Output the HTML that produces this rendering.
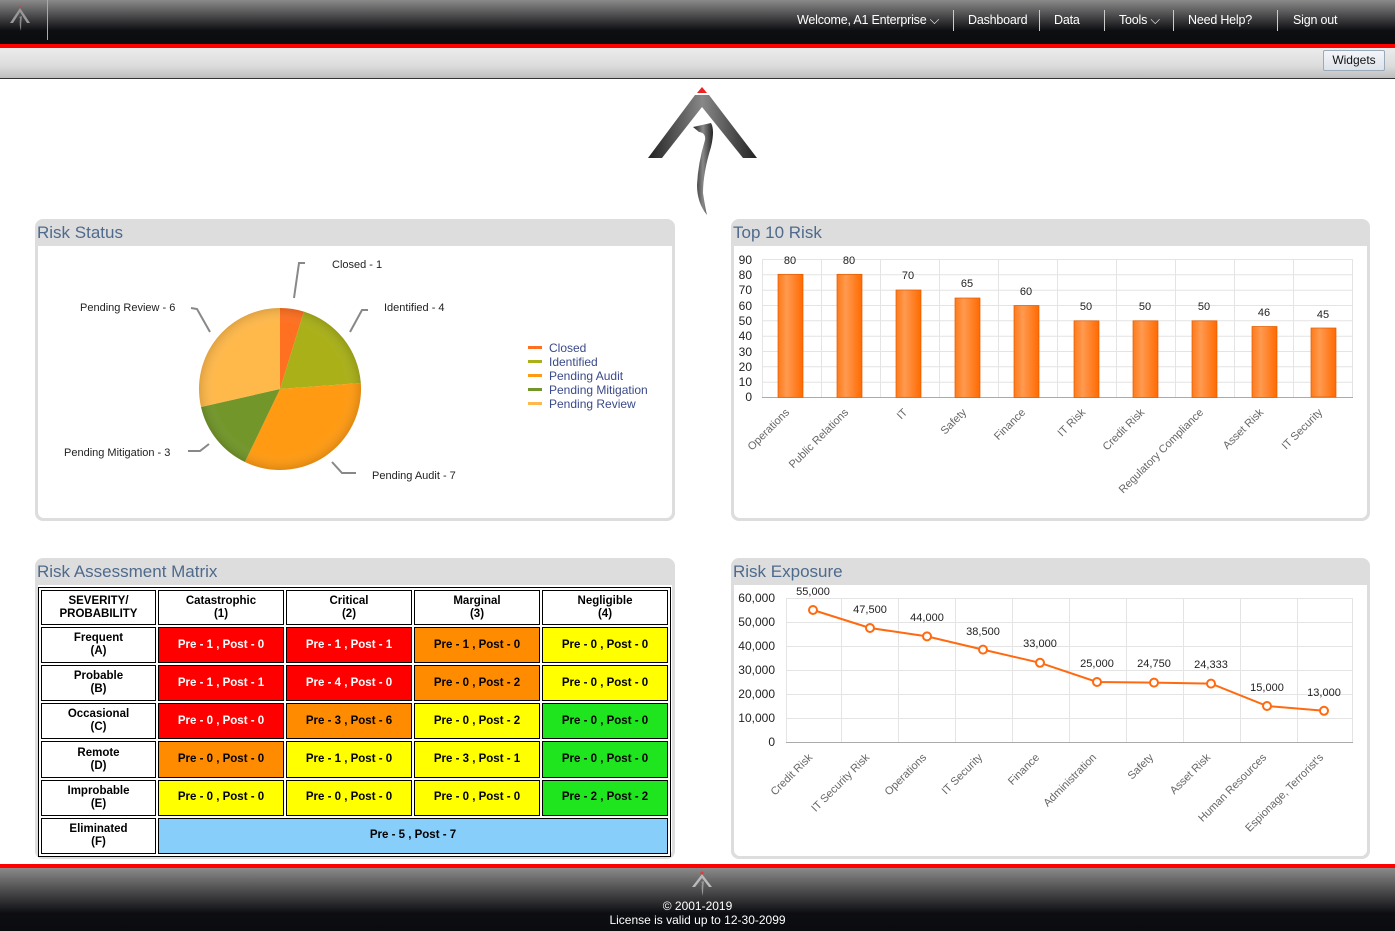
<!DOCTYPE html>
<html><head><meta charset="utf-8">
<style>
*{margin:0;padding:0;box-sizing:border-box}
body{width:1395px;height:931px;position:relative;overflow:hidden;background:#fff;font-family:"Liberation Sans",Arial,sans-serif;}
.top{position:absolute;left:0;top:0;width:1395px;height:44px;background:linear-gradient(#8a8a8a 0%,#3a3a3c 45%,#0d0e12 70%,#0b0c10 100%)}
.red{position:absolute;left:0;width:1395px;height:4px;background:#f00}
.sub{position:absolute;left:0;top:48px;width:1395px;height:31px;background:linear-gradient(#ececec,#dcdcdc 60%,#bdbdbd);border-bottom:1px solid #333}
.nav{position:absolute;top:13px;color:#fff;font-size:12.5px;letter-spacing:-0.2px}
.sep{position:absolute;top:10px;width:1px;height:21px;background:#ccc}
.btn{position:absolute;left:1323px;top:50px;width:62px;height:21px;border:1px solid #9ab;background:linear-gradient(#f4f6fa,#dde3ea);font-size:12px;text-align:center;line-height:19px;color:#111;border-radius:2px}
.panel{position:absolute;background:#ddd;border-radius:8px;}
.panel .ttl{position:absolute;left:2px;top:4px;font-size:17px;color:#4e6a8c}
.panel .in{position:absolute;left:3px;top:27px;right:3px;bottom:3px;background:#fff;border-radius:0 0 6px 6px}
.foot{position:absolute;left:0;top:868px;width:1395px;height:63px;background:linear-gradient(#8a8a8a 0%,#3c3c3e 45%,#0d0e12 72%,#0b0c10);color:#fff;text-align:center;font-size:12px}
table{position:absolute;left:38px;top:587px;border:1px solid #000;border-collapse:separate;border-spacing:2px;background:#fff;width:633px;height:270px}
td{border:1px solid #000;text-align:center;font-size:11.5px;font-weight:bold;line-height:13px;padding:0}
.r{background:#f00;color:#fff}.o{background:#ff8c00}.y{background:#ff0}.g{background:#1fe51f}.b{background:#87cefa}
svg text{font-family:"Liberation Sans",Arial,sans-serif}
</style></head><body>
<div class="top"></div>
<svg style="position:absolute;left:8px;top:5px" width="24" height="28" viewBox="0 0 24 28"><path d="M12 3 L22 18 L19 18 L12 7 L5 18 L2 18Z" fill="#999"/><path d="M10 3 L14 3 L12 1Z" fill="#e33"/><path d="M11 12 L14 11 Q13 18 13 26 Q11 20 12 13Z" fill="#888"/></svg>
<div style="position:absolute;left:47px;top:0;width:1px;height:40px;background:#aaa"></div>
<div class="nav" style="left:797px">Welcome, A1 Enterprise ⌵</div>
<div class="sep" style="left:953px"></div>
<div class="nav" style="left:968px">Dashboard</div>
<div class="sep" style="left:1039px"></div>
<div class="nav" style="left:1054px">Data</div>
<div class="sep" style="left:1104px"></div>
<div class="nav" style="left:1119px">Tools ⌵</div>
<div class="sep" style="left:1173px"></div>
<div class="nav" style="left:1188px">Need Help?</div>
<div class="sep" style="left:1277px"></div>
<div class="nav" style="left:1293px">Sign out</div>
<div class="red" style="top:44px"></div>
<div class="sub"></div>
<div class="btn">Widgets</div>

<svg style="position:absolute;left:645px;top:85px" width="115" height="132" viewBox="0 0 115 132">
<defs><linearGradient id="m" x1="0" x2="1"><stop offset="0" stop-color="#222"/><stop offset=".5" stop-color="#888"/><stop offset="1" stop-color="#222"/></linearGradient></defs>
<path d="M52 3 L62 3 L57 -3Z" fill="#e22" transform="translate(0,5)"/>
<path d="M50 10 L64 10 L112 73 L98 73 L57 22 L17 73 L3 73Z" fill="url(#m)"/>
<path d="M48 42 L66 38 Q70 45 66 62 Q58 88 58 108 Q60 122 62 130 Q52 118 52 100 Q53 78 60 55 Q61 48 54 47Z" fill="url(#m)"/>
</svg>

<div class="panel" style="left:35px;top:219px;width:640px;height:302px"><div class="ttl">Risk Status</div><div class="in"></div></div>
<svg style="position:absolute;left:38px;top:246px" width="634" height="272">
<g transform="translate(-38,-246)">
<defs><radialGradient id="sh" cx=".5" cy=".5" r=".5"><stop offset=".8" stop-color="#fff" stop-opacity="0"/><stop offset="1" stop-color="#000" stop-opacity=".12"/></radialGradient></defs>
<path d="M280 389 L280 308 A81 81 0 0 1 303.9 311.6Z" fill="#ff7020"/>
<path d="M280 389 L303.9 311.6 A81 81 0 0 1 360.8 383Z" fill="#a9b018"/>
<path d="M280 389 L360.8 383 A81 81 0 0 1 244.9 462Z" fill="#ff9a12"/>
<path d="M280 389 L244.9 462 A81 81 0 0 1 201 407Z" fill="#72962a"/>
<path d="M280 389 L201 407 A81 81 0 0 1 280 308Z" fill="#ffb84a"/>
<circle cx="280" cy="389" r="81" fill="url(#sh)"/>
<g stroke="#888" stroke-width="2" fill="none">
<path d="M294 298 L299 263 L305 263"/><path d="M350 332 L362 310 L368 310"/>
<path d="M210 332 L197 309 L191 308"/><path d="M209 444 L200 451 L188 451"/>
<path d="M332 462 L342 473 L356 473"/></g>
<g font-size="11" fill="#222">
<text x="332" y="268">Closed - 1</text><text x="384" y="311">Identified - 4</text>
<text x="80" y="311">Pending Review - 6</text><text x="64" y="456">Pending Mitigation - 3</text>
<text x="372" y="479">Pending Audit - 7</text></g>
<g font-size="12" fill="#3a4a8a">
<rect x="528" y="346" width="14" height="3" fill="#ff7020"/><text x="549" y="352">Closed</text>
<rect x="528" y="360" width="14" height="3" fill="#a9b018"/><text x="549" y="366">Identified</text>
<rect x="528" y="374" width="14" height="3" fill="#ff9a12"/><text x="549" y="380">Pending Audit</text>
<rect x="528" y="388" width="14" height="3" fill="#72962a"/><text x="549" y="394">Pending Mitigation</text>
<rect x="528" y="402" width="14" height="3" fill="#ffb84a"/><text x="549" y="408">Pending Review</text></g>
</g></svg>

<div class="panel" style="left:731px;top:219px;width:639px;height:302px"><div class="ttl">Top 10 Risk</div><div class="in"></div></div>
<svg style="position:absolute;left:0;top:0" width="1395" height="931">
<defs><linearGradient id="bar" x1="0" x2="1"><stop offset="0" stop-color="#ff7a1a"/><stop offset=".35" stop-color="#ff9a50"/><stop offset="1" stop-color="#ff6a00"/></linearGradient></defs>
<g stroke="#e4e4e4" stroke-width="1">
<line x1="762" y1="259.5" x2="1353" y2="259.5"/><line x1="762" y1="274.8" x2="1353" y2="274.8"/><line x1="762" y1="290.2" x2="1353" y2="290.2"/><line x1="762" y1="305.5" x2="1353" y2="305.5"/><line x1="762" y1="320.8" x2="1353" y2="320.8"/><line x1="762" y1="336.2" x2="1353" y2="336.2"/><line x1="762" y1="351.5" x2="1353" y2="351.5"/><line x1="762" y1="366.8" x2="1353" y2="366.8"/><line x1="762" y1="382.2" x2="1353" y2="382.2"/>
<line x1="762.5" y1="259" x2="762.5" y2="397"/><line x1="821.5" y1="259" x2="821.5" y2="397"/><line x1="880.5" y1="259" x2="880.5" y2="397"/><line x1="939.5" y1="259" x2="939.5" y2="397"/><line x1="998.5" y1="259" x2="998.5" y2="397"/><line x1="1057.5" y1="259" x2="1057.5" y2="397"/><line x1="1116.5" y1="259" x2="1116.5" y2="397"/><line x1="1175.5" y1="259" x2="1175.5" y2="397"/><line x1="1234.5" y1="259" x2="1234.5" y2="397"/><line x1="1293.5" y1="259" x2="1293.5" y2="397"/><line x1="1352.5" y1="259" x2="1352.5" y2="397"/>
</g>
<line x1="762" y1="397.5" x2="1353" y2="397.5" stroke="#aaa"/>
<g font-size="12" fill="#222" text-anchor="end">
<text x="752" y="264">90</text><text x="752" y="279">80</text><text x="752" y="294">70</text><text x="752" y="310">60</text><text x="752" y="325">50</text><text x="752" y="340">40</text><text x="752" y="356">30</text><text x="752" y="371">20</text><text x="752" y="386">10</text><text x="752" y="401">0</text></g>
<g fill="url(#bar)" stroke="#e05a00" stroke-width=".7">
<rect x="778" y="274.3" width="25" height="123"/><rect x="837" y="274.3" width="25" height="123"/><rect x="896" y="290" width="25" height="107.3"/><rect x="955" y="298" width="25" height="99.5"/><rect x="1014" y="305.5" width="25" height="92"/><rect x="1074" y="320.8" width="25" height="76.7"/><rect x="1133" y="320.8" width="25" height="76.7"/><rect x="1192" y="320.8" width="25" height="76.7"/><rect x="1252" y="326.5" width="25" height="70.9"/><rect x="1311" y="328" width="25" height="69"/></g>
<g font-size="11" fill="#222" text-anchor="middle">
<text x="790" y="264">80</text><text x="849" y="264">80</text><text x="908" y="279">70</text><text x="967" y="287">65</text><text x="1026" y="295">60</text><text x="1086" y="310">50</text><text x="1145" y="310">50</text><text x="1204" y="310">50</text><text x="1264" y="316">46</text><text x="1323" y="318">45</text></g>
<g font-size="11" fill="#666" text-anchor="end">
<text transform="translate(790,413) rotate(-45)">Operations</text><text transform="translate(849,413) rotate(-45)">Public Relations</text><text transform="translate(908,413) rotate(-45)">IT</text><text transform="translate(967,413) rotate(-45)">Safety</text><text transform="translate(1026,413) rotate(-45)">Finance</text><text transform="translate(1086,413) rotate(-45)">IT Risk</text><text transform="translate(1145,413) rotate(-45)">Credit Risk</text><text transform="translate(1204,413) rotate(-45)">Regulatory Compliance</text><text transform="translate(1264,413) rotate(-45)">Asset Risk</text><text transform="translate(1323,413) rotate(-45)">IT Security</text></g>
</svg>

<div class="panel" style="left:35px;top:558px;width:640px;height:301px"><div class="ttl">Risk Assessment Matrix</div><div class="in"></div></div>
<table>
<tr style="height:35px"><td style="width:115px">SEVERITY/<br>PROBABILITY</td><td>Catastrophic<br>(1)</td><td>Critical<br>(2)</td><td>Marginal<br>(3)</td><td>Negligible<br>(4)</td></tr>
<tr><td>Frequent<br>(A)</td><td class="r">Pre - 1 , Post - 0</td><td class="r">Pre - 1 , Post - 1</td><td class="o">Pre - 1 , Post - 0</td><td class="y">Pre - 0 , Post - 0</td></tr>
<tr><td>Probable<br>(B)</td><td class="r">Pre - 1 , Post - 1</td><td class="r">Pre - 4 , Post - 0</td><td class="o">Pre - 0 , Post - 2</td><td class="y">Pre - 0 , Post - 0</td></tr>
<tr><td>Occasional<br>(C)</td><td class="r">Pre - 0 , Post - 0</td><td class="o">Pre - 3 , Post - 6</td><td class="y">Pre - 0 , Post - 2</td><td class="g">Pre - 0 , Post - 0</td></tr>
<tr><td>Remote<br>(D)</td><td class="o">Pre - 0 , Post - 0</td><td class="y">Pre - 1 , Post - 0</td><td class="y">Pre - 3 , Post - 1</td><td class="g">Pre - 0 , Post - 0</td></tr>
<tr><td>Improbable<br>(E)</td><td class="y">Pre - 0 , Post - 0</td><td class="y">Pre - 0 , Post - 0</td><td class="y">Pre - 0 , Post - 0</td><td class="g">Pre - 2 , Post - 2</td></tr>
<tr><td>Eliminated<br>(F)</td><td class="b" colspan="4">Pre - 5 , Post - 7</td></tr>
</table>

<div class="panel" style="left:731px;top:558px;width:639px;height:301px"><div class="ttl">Risk Exposure</div><div class="in"></div></div>
<svg style="position:absolute;left:0;top:0" width="1395" height="931">
<g stroke="#e4e4e4">
<line x1="786" y1="598.5" x2="1353" y2="598.5"/><line x1="786" y1="622.5" x2="1353" y2="622.5"/><line x1="786" y1="646.5" x2="1353" y2="646.5"/><line x1="786" y1="670.5" x2="1353" y2="670.5"/><line x1="786" y1="694.5" x2="1353" y2="694.5"/><line x1="786" y1="718.5" x2="1353" y2="718.5"/>
<line x1="786.5" y1="598" x2="786.5" y2="742"/><line x1="841.5" y1="598" x2="841.5" y2="742"/><line x1="898.5" y1="598" x2="898.5" y2="742"/><line x1="955.5" y1="598" x2="955.5" y2="742"/><line x1="1012.5" y1="598" x2="1012.5" y2="742"/><line x1="1069.5" y1="598" x2="1069.5" y2="742"/><line x1="1126.5" y1="598" x2="1126.5" y2="742"/><line x1="1183.5" y1="598" x2="1183.5" y2="742"/><line x1="1240.5" y1="598" x2="1240.5" y2="742"/><line x1="1297.5" y1="598" x2="1297.5" y2="742"/><line x1="1352.5" y1="598" x2="1352.5" y2="742"/></g>
<line x1="786" y1="742.5" x2="1353" y2="742.5" stroke="#aaa"/>
<g font-size="12" fill="#222" text-anchor="end">
<text x="775" y="602">60,000</text><text x="775" y="626">50,000</text><text x="775" y="650">40,000</text><text x="775" y="674">30,000</text><text x="775" y="698">20,000</text><text x="775" y="722">10,000</text><text x="775" y="746">0</text></g>
<polyline points="813,610 870,628 927,636.4 983,649.6 1040,662.8 1097,682 1154,682.6 1211,683.6 1267,706 1324,710.8" fill="none" stroke="#ff6a10" stroke-width="2"/>
<g fill="#fff" stroke="#ff6a10" stroke-width="2">
<circle cx="813" cy="610" r="4"/><circle cx="870" cy="628" r="4"/><circle cx="927" cy="636.4" r="4"/><circle cx="983" cy="649.6" r="4"/><circle cx="1040" cy="662.8" r="4"/><circle cx="1097" cy="682" r="4"/><circle cx="1154" cy="682.6" r="4"/><circle cx="1211" cy="683.6" r="4"/><circle cx="1267" cy="706" r="4"/><circle cx="1324" cy="710.8" r="4"/></g>
<g font-size="11" fill="#222" text-anchor="middle">
<text x="813" y="595">55,000</text><text x="870" y="613">47,500</text><text x="927" y="621">44,000</text><text x="983" y="635">38,500</text><text x="1040" y="647">33,000</text><text x="1097" y="667">25,000</text><text x="1154" y="667">24,750</text><text x="1211" y="668">24,333</text><text x="1267" y="691">15,000</text><text x="1324" y="696">13,000</text></g>
<g font-size="11" fill="#666" text-anchor="end">
<text transform="translate(813,758) rotate(-45)">Credit Risk</text><text transform="translate(870,758) rotate(-45)">IT Security Risk</text><text transform="translate(927,758) rotate(-45)">Operations</text><text transform="translate(983,758) rotate(-45)">IT Security</text><text transform="translate(1040,758) rotate(-45)">Finance</text><text transform="translate(1097,758) rotate(-45)">Administration</text><text transform="translate(1154,758) rotate(-45)">Safety</text><text transform="translate(1211,758) rotate(-45)">Asset Risk</text><text transform="translate(1267,758) rotate(-45)">Human Resources</text><text transform="translate(1324,758) rotate(-45)">Espionage, Terrorist's</text></g>
</svg>

<div class="red" style="top:864px"></div>
<div class="foot">
<svg style="position:absolute;left:690px;top:3px" width="24" height="26" viewBox="0 0 24 26"><path d="M12 3 L22 16 L19 16 L12 7 L5 16 L2 16Z" fill="#bbb"/><circle cx="12" cy="2" r="1.5" fill="#e33"/><path d="M11 11 L14 10 Q13 17 13 25 Q11 19 12 12Z" fill="#999"/></svg>
<div style="position:absolute;top:31px;width:100%">© 2001-2019</div>
<div style="position:absolute;top:45px;width:100%">License is valid up to 12-30-2099</div>
</div>
</body></html>
